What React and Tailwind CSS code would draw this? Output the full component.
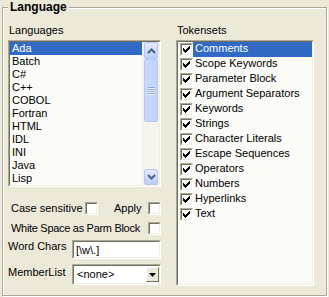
import React from 'react';

const languages = ['Ada', 'Batch', 'C#', 'C++', 'COBOL', 'Fortran', 'HTML', 'IDL', 'INI', 'Java', 'Lisp'];
const tokensets = [
    'Comments', 'Scope Keywords', 'Parameter Block', 'Argument Separators', 'Keywords', 'Strings',
    'Character Literals', 'Escape Sequences', 'Operators', 'Numbers', 'Hyperlinks', 'Text',
];

// classic 2px sunken edge
const Sunken = ({ className = '', innerClass = '', children }) => (
    <div className={`border border-t-[#aca899] border-l-[#aca899] border-r-white border-b-white ${className}`}>
        <div className={`h-full w-full border border-t-[#716f64] border-l-[#716f64] border-r-[#f1efe2] border-b-[#f1efe2] ${innerClass}`}>
            {children}
        </div>
    </div>
);

const checkPixels = [[6, 0, 1], [5, 1, 2], [0, 2, 1], [4, 2, 3], [0, 3, 2], [3, 3, 3], [0, 4, 5], [1, 5, 3], [2, 6, 1]];

const CheckBox = ({ checked }) => (
    <Sunken className="w-[13px] h-[13px] shrink-0" innerClass="bg-white flex items-center justify-center">
        {checked && (
            <svg width="7" height="7" viewBox="0 0 7 7" shapeRendering="crispEdges">
                {checkPixels.map(([x, y, w], i) => <rect key={i} x={x} y={y} width={w} height="1" fill="#000" />)}
            </svg>
        )}
    </Sunken>
);

const ScrollButton = ({ down, className = '' }) => (
    <div className={`mx-[1px] rounded-[2px] border border-[#b5c8f2] bg-gradient-to-b from-[#e2eafe] to-[#bccff8] flex items-center justify-center ${className}`}>
        <svg width="9" height="6" viewBox="0 0 9 6">
            <path d={down ? 'M1 1 L4.5 4.5 L8 1' : 'M1 5 L4.5 1.5 L8 5'} stroke="#4d6185" strokeWidth="2" fill="none" />
        </svg>
    </div>
);

export default function App() {
    return (
        <div className="w-[329px] h-[297px] bg-[#ece9d8] pt-[7px] pl-[2px] text-[11px] leading-[13px] text-black font-['Liberation_Sans',Arial,sans-serif] overflow-hidden">
            <div className="relative w-[325px] h-[289px] border border-[#aca899] shadow-[inset_1px_1px_0_#fff,1px_1px_0_#fff] pl-[5px] pt-[16px] flex">
                <div className="absolute -top-[8px] left-[5px] bg-[#ece9d8] px-[2px] text-[12px] leading-[14px] font-bold">Language</div>

                {/* Languages column */}
                <div className="w-[153px] flex flex-col">
                    <div className="h-[13px] pl-[1px]">Languages</div>
                    <Sunken className="mt-[3px] h-[147px]" innerClass="bg-[#fbfbf7] flex">
                        <div className="flex-1">
                            {languages.map((l, i) => (
                                <div key={l} className={`h-[13px] pl-[2px] ${i === 0 ? 'bg-[#316ac5] text-white' : ''}`}>{l}</div>
                            ))}
                        </div>
                        <div className="w-[17px] flex flex-col bg-[#f5f4ef] border-l border-[#eeede5]">
                            <ScrollButton className="h-[17px]" />
                            <div className="h-[63px] mx-[1px] mt-[0px] rounded-[2px] border border-[#b5c8f2] bg-gradient-to-r from-[#c9d8fc] to-[#c2d3fb] flex flex-col items-center justify-center gap-[1px]">
                                {[0, 1, 2, 3].map(i => <div key={i} className="w-[7px] h-[1px] bg-[#8ca5e4] shadow-[0_1px_0_#eef3ff]" />)}
                            </div>
                            <div className="flex-1" />
                            <ScrollButton down className="h-[16px]" />
                        </div>
                    </Sunken>

                    <div className="mt-[15px] h-[13px] pl-[3px] flex items-center">
                        <span className="w-[74px]">Case sensitive</span>
                        <CheckBox />
                        <span className="ml-[16px] w-[34px]">Apply</span>
                        <CheckBox />
                    </div>
                    <div className="mt-[7px] h-[13px] pl-[3px] flex items-center">
                        <span className="w-[137px] tracking-[-0.3px]">White Space as Parm Block</span>
                        <CheckBox />
                    </div>
                    <div className="mt-[5px] flex items-start">
                        <span className="w-[64px] pl-[0px]">Word Chars</span>
                        <Sunken className="w-[89px] h-[19px]" innerClass="bg-white pl-[2px] pt-[2px]">[\w\.]</Sunken>
                    </div>
                    <div className="mt-[5px] flex items-start">
                        <span className="w-[64px] mt-[2px]">MemberList</span>
                        <Sunken className="w-[89px] h-[21px]" innerClass="bg-white flex items-center">
                            <span className="flex-1 pl-[3px]">&lt;none&gt;</span>
                            <div className="w-[13px] h-[15px] border border-t-white border-l-white border-r-[#716f64] border-b-[#716f64] bg-[#ece9d8] flex items-center justify-center mr-[0px]">
                                <svg width="7" height="4" viewBox="0 0 7 4"><path d="M0 0 H7 L3.5 4 Z" fill="#000" /></svg>
                            </div>
                        </Sunken>
                    </div>
                </div>

                {/* Tokensets column */}
                <div className="ml-[15px] w-[138px] flex flex-col">
                    <div className="h-[13px] pl-[1px]">Tokensets</div>
                    <Sunken className="mt-[3px] h-[246px]" innerClass="bg-[#fbfbf7]">
                        {tokensets.map((t, i) => (
                            <div key={t} className="h-[15px] flex items-center">
                                <div className="ml-[2px]"><CheckBox checked /></div>
                                <div className={`flex-1 h-full pl-[2px] ${i === 0 ? 'bg-[#316ac5] text-white' : ''}`}>{t}</div>
                            </div>
                        ))}
                    </Sunken>
                </div>
            </div>
        </div>
    );
}
